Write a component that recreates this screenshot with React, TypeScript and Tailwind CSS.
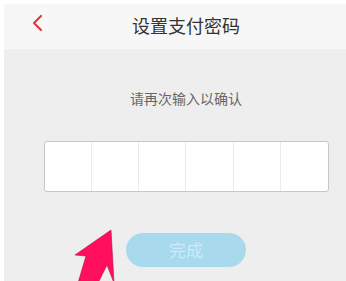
const CELLS = [0, 1, 2, 3, 4, 5];

export default function App() {
  return (
    <div
      className="relative w-[346px] h-[281px] overflow-hidden bg-white pl-[4px] pt-[4px]"
      style={{ fontFamily: '"Noto Sans CJK SC", "Noto Sans", sans-serif' }}
    >
      <div className="flex flex-col h-full">
        {/* 顶部导航 */}
        <div className="relative h-[45px] bg-[#f7f7f7] flex items-center justify-center pl-[22px] pb-[3px]">
          <svg className="absolute left-[27px] top-[10px]" width="14" height="18" viewBox="0 0 14 18">
            <polyline points="10,2 3,9 10,16" fill="none" stroke="#e2383f" strokeWidth="2.2" strokeLinecap="round" strokeLinejoin="round" />
          </svg>
          <h1 className="text-[18px] leading-[24px] text-[#333333]">设置支付密码</h1>
        </div>

        {/* 内容 */}
        <div className="flex-1 bg-[#eeeeee] flex flex-col items-center pl-[22px]">
          <p className="mt-[39px] text-[14px] leading-[20px] text-[#666666]">请再次输入以确认</p>
          <div className="mt-[33px] w-[285px] h-[51px] flex bg-white border-[1.5px] border-[#c6c6c6] rounded-[3px] overflow-hidden">
            {CELLS.map((i) => (
              <div key={i} className={i === 0 ? "flex-1" : "flex-1 border-l border-[#ebebeb]"} />
            ))}
          </div>
          <button className="mt-[41px] w-[120px] h-[34px] rounded-full bg-[#a8d9ed] text-[17px] text-[#cdeaf6] flex items-center justify-center">
            完成
          </button>
        </div>
      </div>

      {/* 指示箭头 */}
      <svg className="absolute left-0 top-0" width="346" height="281" viewBox="0 0 346 281">
        <polygon
          points="111,230 75,255 86,256 78,283 98,283 107,265 114,283"
          fill="#ff0f5c"
          stroke="#b0103f"
          strokeWidth="0.6"
          strokeLinejoin="round"
        />
      </svg>
    </div>
  );
}
